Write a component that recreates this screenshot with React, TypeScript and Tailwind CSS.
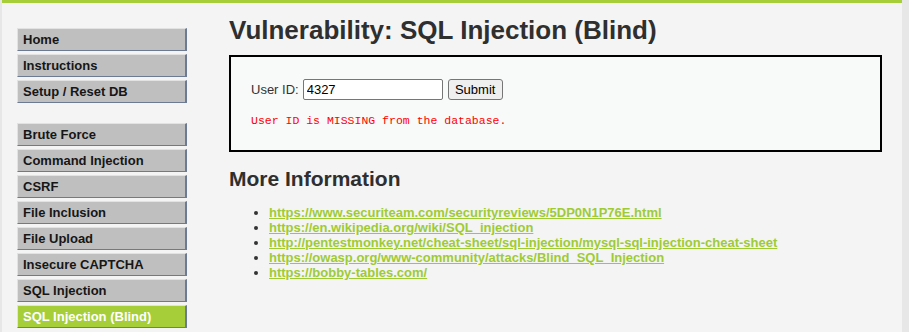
import React from 'react'

const groupOne = ['Home', 'Instructions', 'Setup / Reset DB']

const groupTwo = [
    'Brute Force',
    'Command Injection',
    'CSRF',
    'File Inclusion',
    'File Upload',
    'Insecure CAPTCHA',
    'SQL Injection',
    'SQL Injection (Blind)',
]

const links = [
    'https://www.securiteam.com/securityreviews/5DP0N1P76E.html',
    'https://en.wikipedia.org/wiki/SQL_injection',
    'http://pentestmonkey.net/cheat-sheet/sql-injection/mysql-sql-injection-cheat-sheet',
    'https://owasp.org/www-community/attacks/Blind_SQL_Injection',
    'https://bobby-tables.com/',
]

function MenuItem({ label, selected }: { label: string; selected?: boolean }) {
    return (
        <li
            className={`h-[23px] pl-[5px] leading-[21px] text-[13px] font-bold border border-r-2 border-t-[#e2e2e2] border-l-[#e2e2e2] border-b-[#6c7a93] border-r-[#6c7a93] ${
                selected ? 'bg-[#a6ce39] text-white' : 'bg-[#bfbfbf] text-[#161616]'
            }`}
        >
            {label}
        </li>
    )
}

export default function App() {
    return (
        <div className="min-h-screen bg-[#e7e7e7] font-['Liberation_Sans',Arial,sans-serif]">
            <div className="ml-[2px] w-[900px] min-h-screen bg-[#f4f4f4] border-t-[3px] border-[#a6ce39] flex">
                {/* sidebar */}
                <div className="w-[227px] shrink-0 pl-[15px] pt-[25px]">
                    <ul className="w-[170px] flex flex-col gap-[3px]">
                        {groupOne.map(item => (
                            <MenuItem key={item} label={item} />
                        ))}
                    </ul>
                    <ul className="w-[170px] mt-[20px] flex flex-col gap-[3px]">
                        {groupTwo.map(item => (
                            <MenuItem key={item} label={item} selected={item === 'SQL Injection (Blind)'} />
                        ))}
                    </ul>
                </div>

                {/* main */}
                <div className="flex-1 pt-[12px] pr-[20px]">
                    <h1 className="text-[26px] leading-[30px] font-bold text-[#2f2f2f]">
                        Vulnerability: SQL Injection (Blind)
                    </h1>

                    <div className="mt-[10px] h-[97px] border-2 border-black bg-[#f8f9f9] pl-[20px] pt-[22px]">
                        <form className="flex items-center h-[21px] text-[13px]" onSubmit={e => e.preventDefault()}>
                            <label className="text-[#333]">User ID:</label>
                            <input
                                type="text"
                                defaultValue="4327"
                                className="ml-[4px] w-[140px] h-[21px] px-[3px] bg-white border border-[#767676] rounded-[2px] text-[13px] text-black outline-none"
                            />
                            <button
                                type="submit"
                                className="ml-[5px] w-[55px] h-[21px] bg-[#efefef] border border-[#767676] rounded-[3px] text-[13px] text-black"
                            >
                                Submit
                            </button>
                        </form>
                        <pre className="mt-[14px] text-[11.5px] leading-[14px] text-[#ff0000] font-['Liberation_Mono',monospace]">
                            User ID is MISSING from the database.
                        </pre>
                    </div>

                    <h2 className="mt-[15px] text-[21px] leading-[24px] font-bold text-[#2f2f2f]">More Information</h2>

                    <ul className="mt-[14px] pl-[40px] list-disc text-[13px] leading-[15px] font-bold marker:text-[#333]">
                        {links.map(href => (
                            <li key={href}>
                                <a href={href} className="text-[#9ecb34] underline">
                                    {href}
                                </a>
                            </li>
                        ))}
                    </ul>
                </div>
            </div>
        </div>
    )
}
